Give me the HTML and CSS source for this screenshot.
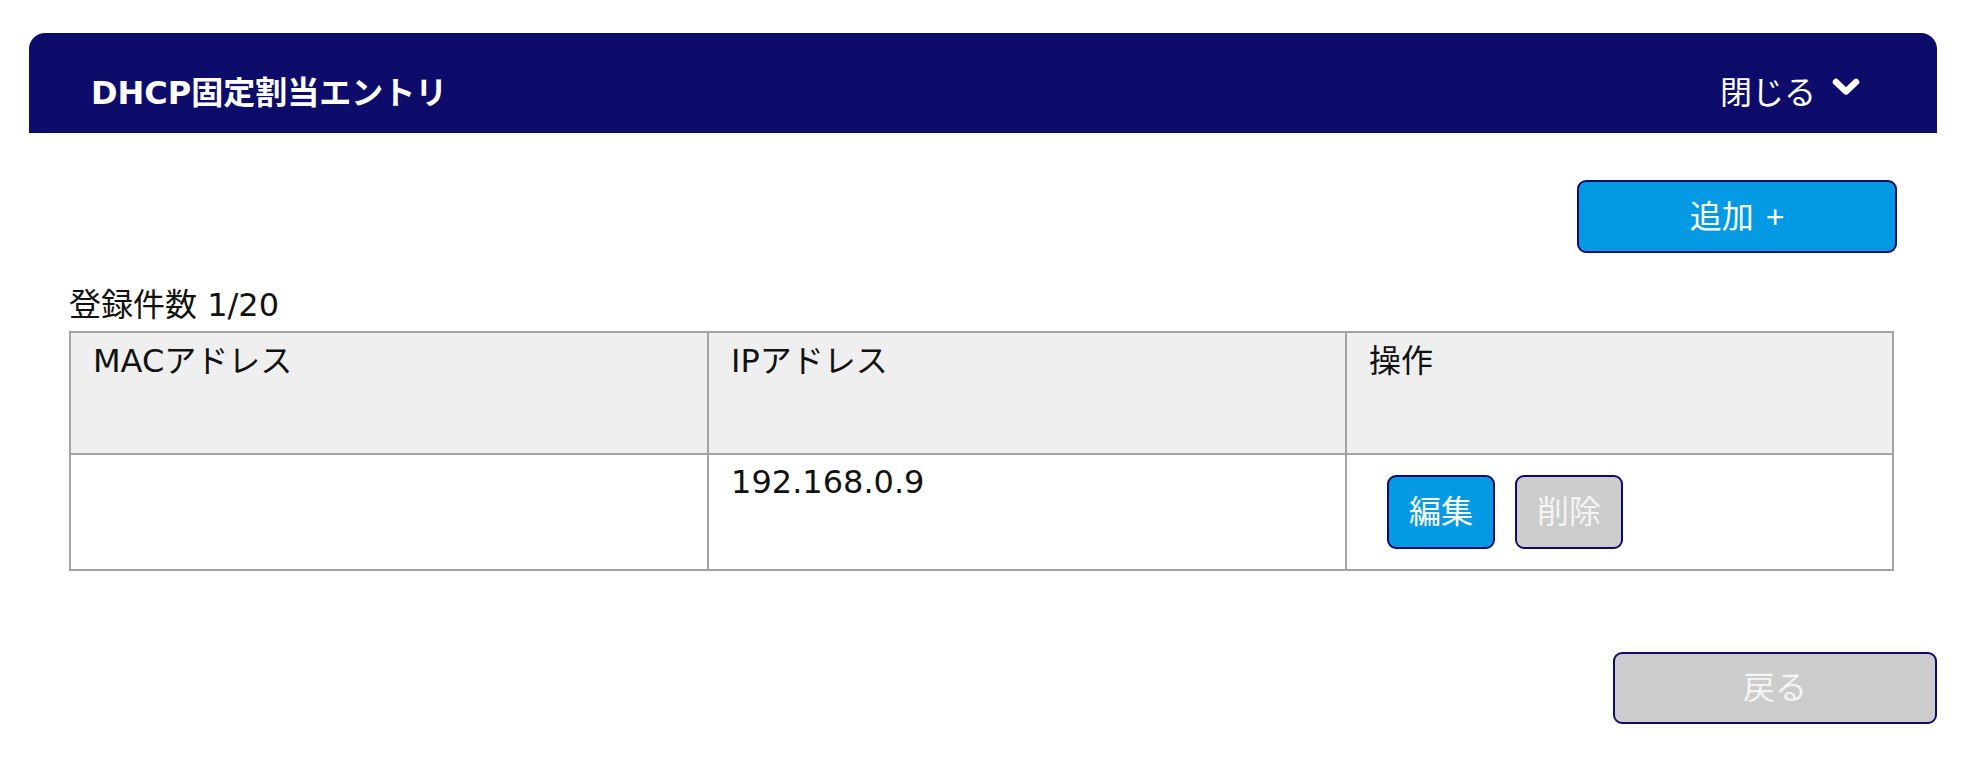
FILE: index.html
```html
<!DOCTYPE html>
<html lang="ja">
<head>
<meta charset="utf-8">
<title>DHCP固定割当エントリ</title>
<link rel="stylesheet" href="styles.css">
</head>
<body>
<section class="panel">
  <header class="panel-header">
    <h1 class="panel-title">DHCP固定割当エントリ</h1>
    <button class="toggle" type="button">
      <span class="toggle-label">閉じる</span>
      <svg class="chevron" width="28" height="18" viewBox="0 0 28 18" aria-hidden="true">
        <polyline points="4,4 14,13.5 24,4" fill="none" stroke="#ffffff" stroke-width="6.5" stroke-linecap="round" stroke-linejoin="round"/>
      </svg>
    </button>
  </header>
  <div class="panel-body">
    <div class="toolbar">
      <button class="btn btn-primary btn-add" type="button">追加<span class="plus">+</span></button>
    </div>
    <p class="count">登録件数 1/20</p>
    <table class="entries">
      <colgroup>
        <col class="col-mac">
        <col class="col-ip">
        <col class="col-ops">
      </colgroup>
      <thead>
        <tr>
          <th>MACアドレス</th>
          <th>IPアドレス</th>
          <th>操作</th>
        </tr>
      </thead>
      <tbody>
        <tr>
          <td></td>
          <td>192.168.0.9</td>
          <td class="ops">
            <button class="btn btn-primary btn-small" type="button">編集</button>
            <button class="btn btn-disabled btn-small" type="button">削除</button>
          </td>
        </tr>
      </tbody>
    </table>
  </div>
  <div class="footer">
    <button class="btn btn-disabled btn-back" type="button">戻る</button>
  </div>
</section>
</body>
</html>
```

FILE: styles.css
```css
* {
  box-sizing: border-box;
}

html, body {
  background: #ffffff;
}

body {
  margin: 0;
  padding: 33px 35px 0 29px;
  font-family: "DejaVu Sans", "Noto Sans CJK JP", sans-serif;
  font-size: 32px;
  line-height: 48px;
  color: #111111;
}

.panel-header {
  height: 100px;
  padding: 20px 77px 0 62px;
  background: #0d0c6b;
  border-radius: 16px 16px 0 0;
  display: flex;
  align-items: center;
  justify-content: space-between;
  color: #ffffff;
}

.panel-title {
  margin: 0;
  font-size: 32px;
  font-weight: bold;
  line-height: 48px;
}

.toggle {
  display: flex;
  align-items: center;
  gap: 16px;
  padding: 0;
  border: 0;
  background: transparent;
  color: #ffffff;
  font: inherit;
  line-height: 48px;
}

.chevron {
  display: block;
  margin-bottom: 13px;
}

.panel-body {
  padding: 47px 43px 0 40px;
}

.toolbar {
  display: flex;
  justify-content: flex-end;
  padding-right: 0;
  margin-right: -3px;
}

.btn {
  font: inherit;
  line-height: 48px;
  border: 2px solid #0d0c6b;
  border-radius: 9px;
  color: #ffffff;
  padding: 0;
  display: inline-flex;
  align-items: center;
  justify-content: center;
}

.plus {
  font-family: "Liberation Sans", sans-serif;
  margin-left: 12px;
}

.btn-primary {
  background: #049ae3;
}

.btn-disabled {
  background: #cccccc;
  color: #f4f4f4;
}

.btn-add {
  width: 320px;
  height: 73px;
}

.btn-small {
  width: 108px;
  height: 74px;
}

.btn-small + .btn-small {
  margin-left: 20px;
}

.btn-back {
  width: 324px;
  height: 72px;
}

.count {
  margin: 28px 0 2px;
}

.entries {
  width: 100%;
  border-collapse: collapse;
  table-layout: fixed;
  border: 2px solid #a3a3a3;
}

.col-mac,
.col-ip {
  width: 35%;
}

.col-ops {
  width: 30%;
}

.entries th,
.entries td {
  border: 2px solid #a3a3a3;
  text-align: left;
  vertical-align: top;
  font-weight: normal;
  padding: 4px 22px 0;
}

.entries th {
  background: #efefef;
  height: 122px;
}

.entries td {
  height: 116px;
  padding-top: 3px;
}

.entries td.ops {
  padding: 20px 22px 0 40px;
  font-size: 0;
  line-height: 0;
}

.entries td.ops .btn {
  font-size: 32px;
}

.footer {
  display: flex;
  justify-content: flex-end;
  margin-top: 81px;
}
```
